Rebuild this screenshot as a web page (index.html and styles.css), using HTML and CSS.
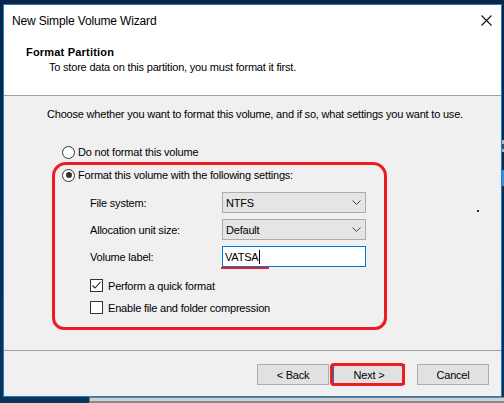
FILE: index.html
```html
<!DOCTYPE html>
<html>
<head>
<meta charset="utf-8">
<link rel="stylesheet" href="styles.css">
</head>
<body>
<div class="behind-bottom"></div>
<div class="behind-right"></div>
<div class="window">
  <div class="titlebar">
    <span class="title">New Simple Volume Wizard</span>
    <svg class="close" width="11" height="11" viewBox="0 0 11 11"><path d="M0.5 0.5 L10.5 10.5 M10.5 0.5 L0.5 10.5" stroke="#111" stroke-width="1.1" fill="none"/></svg>
  </div>
  <div class="header">
    <div class="h-title">Format Partition</div>
    <div class="h-sub">To store data on this partition, you must format it first.</div>
  </div>
  <div class="content">
    <p class="intro">Choose whether you want to format this volume, and if so, what settings you want to use.</p>
    <div class="radio-row first"><span class="radio"></span><span>Do not format this volume</span></div>
    <div class="radio-row second"><span class="radio checked"></span><span>Format this volume with the following settings:</span></div>
    <div class="settings">
      <div class="field">
        <span class="lbl">File system:</span>
        <div class="select"><span>NTFS</span><svg width="9" height="5" viewBox="0 0 9 5"><path d="M0.5 0.5 L4.5 4.5 L8.5 0.5" stroke="#444" fill="none"/></svg></div>
      </div>
      <div class="field">
        <span class="lbl">Allocation unit size:</span>
        <div class="select"><span>Default</span><svg width="9" height="5" viewBox="0 0 9 5"><path d="M0.5 0.5 L4.5 4.5 L8.5 0.5" stroke="#444" fill="none"/></svg></div>
      </div>
      <div class="field">
        <span class="lbl">Volume label:</span>
        <div class="textbox"><span>VATSA</span><span class="caret"></span><span class="underline"></span></div>
      </div>
      <div class="check-row top"><span class="checkbox"><svg width="11" height="11" viewBox="0 0 11 11"><path d="M1.5 5.5 L4 8 L9.5 2" stroke="#222" stroke-width="1.1" fill="none"/></svg></span><span>Perform a quick format</span></div>
      <div class="check-row"><span class="checkbox"></span><span>Enable file and folder compression</span></div>
    </div>
    <div class="annot-box"></div>
    <span class="stray"></span>
  </div>
  <div class="footer">
    <button class="btn">&lt; Back</button>
    <button class="btn default">Next &gt;</button>
    <button class="btn cancel">Cancel</button>
    <div class="annot-next"></div>
  </div>
</div>
</body>
</html>
```
FILE: styles.css
```css
* { box-sizing: border-box; }
html, body { margin: 0; padding: 0; }
body {
  width: 504px;
  height: 403px;
  overflow: hidden;
  position: relative;
  background: linear-gradient(180deg, #0a2646 0%, #0b2c50 60%, #0d3358 100%);
  font-family: "Liberation Sans", Arial, sans-serif;
  font-size: 11px;
  letter-spacing: -0.2px;
  color: #000;
}
.behind-bottom {
  position: absolute;
  left: 89px;
  top: 397px;
  right: 0;
  height: 6px;
  background: #cfcfcf;
  border-top: 1px solid #7a7a7a;
  border-left: 1px solid #7a7a7a;
  border-bottom: 2px solid #8a8a8a;
}
.behind-right {
  position: absolute;
  left: 502px;
  top: 140px;
  width: 2px;
  height: 50px;
  background: linear-gradient(180deg, #b8b8b8 0 4px, #3a4a5a 4px 9px, #b0b0b0 9px 12px, #1b2b3b 12px 30px, #3d8fd6 30px 46px, #1b2b3b 46px);
}
.window {
  position: absolute;
  left: 3px;
  top: 4px;
  width: 499px;
  height: 393px;
  border: 1px solid #1a7dcf;
  background: #f0f0f0;
  display: flex;
  flex-direction: column;
}
.titlebar {
  height: 31px;
  background: #fff;
  display: flex;
  align-items: center;
  justify-content: space-between;
  padding: 0 9px 0 8px;
}
.title {
  font-family: "Liberation Sans", Arial, sans-serif;
  font-size: 12px;
  letter-spacing: -0.15px;
  color: #000;
}
.close { margin-top: -1px; }
.header {
  height: 60px;
  background: #fff;
  border-bottom: 1px solid #a0a0a0;
  padding: 9px 0 0 22px;
}
.h-title {
  font-weight: bold;
  line-height: 14px;
  letter-spacing: 0.2px;
}
.h-sub {
  line-height: 14px;
  margin-top: 1px;
  padding-left: 23px;
}
.content {
  height: 255px;
  border-bottom: 1px solid #a0a0a0;
  position: relative;
  padding: 11px 0 0 43px;
}
.intro {
  margin: 0;
  line-height: 14px;
}
.radio-row {
  display: flex;
  align-items: center;
  gap: 3px;
  height: 16px;
  margin-left: 15px;
}
.radio-row.first { margin-top: 23px; }
.radio-row.second { margin-top: 7px; }
.radio {
  width: 13px;
  height: 13px;
  border: 1px solid #333;
  border-radius: 50%;
  background: #fff;
  display: flex;
  align-items: center;
  justify-content: center;
}
.radio.checked::after {
  content: "";
  width: 6px;
  height: 6px;
  border-radius: 50%;
  background: #333;
}
.settings {
  margin: 9px 0 0 43px;
  display: flex;
  flex-direction: column;
}
.field {
  display: flex;
  align-items: center;
  height: 21px;
  margin-bottom: 6px;
}
.lbl { width: 132px; }
.select {
  width: 144px;
  height: 21px;
  background: #e5e5e5;
  border: 1px solid #adadad;
  display: flex;
  align-items: center;
  justify-content: space-between;
  padding: 0 4px 0 3px;
}
.textbox {
  position: relative;
  width: 144px;
  height: 21px;
  background: #fff;
  border: 1px solid #0078d7;
  display: flex;
  align-items: center;
  padding-left: 2px;
}
.caret {
  width: 1px;
  height: 14px;
  background: #000;
  margin-left: 1px;
}
.underline {
  position: absolute;
  left: -2px;
  bottom: -3px;
  width: 48px;
  height: 2px;
  background: #ed1c24;
}
.check-row {
  display: flex;
  align-items: center;
  gap: 5px;
  height: 13px;
  margin-top: 9px;
}
.check-row.top { margin-top: 6px; }
.checkbox {
  width: 13px;
  height: 13px;
  border: 1px solid #333;
  background: #fff;
  display: flex;
  align-items: center;
  justify-content: center;
}
.annot-box {
  position: absolute;
  left: 48px;
  top: 66px;
  width: 335px;
  height: 168px;
  border: 3px solid #ed1c24;
  border-radius: 14px 14px 12px 12px;
}
.stray {
  position: absolute;
  left: 473px;
  top: 114px;
  width: 2px;
  height: 2px;
  background: #333;
}
.footer {
  position: relative;
  flex: 1;
  display: flex;
  justify-content: flex-end;
  align-items: flex-start;
  padding: 13px 12px 0 0;
}
.btn {
  width: 72px;
  height: 21px;
  background: #e1e1e1;
  border: 1px solid #adadad;
  font-family: "Liberation Sans", Arial, sans-serif;
  font-size: 11px;
  letter-spacing: -0.2px;
  color: #000;
  padding: 0;
  margin: 0 0 0 4px;
}
.btn.default { border-color: #0078d7; }
.btn.cancel { margin-left: 12px; }
.annot-next {
  position: absolute;
  left: 326px;
  top: 12px;
  width: 75px;
  height: 23px;
  border: 3px solid #ed1c24;
  border-radius: 4px;
}
```
